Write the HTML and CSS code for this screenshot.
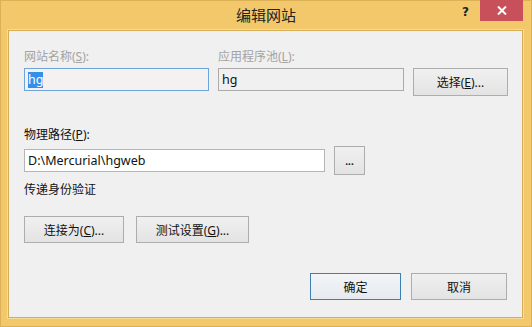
FILE: index.html
```html
<!DOCTYPE html>
<html lang="zh-CN">
<head>
    <meta charset="UTF-8">
    <link rel="stylesheet" href="styles.css">
    <title>编辑网站</title>
</head>
<body>
    <section class="window">

        <div class="titlebar">
            <span class="title">编辑网站</span>
            <span class="help">?</span>
            <span class="close">
                <svg width="10" height="9" viewBox="0 0 10 9">
                    <path d="M1 0.5 L9 8.5 M9 0.5 L1 8.5" stroke="#fff" stroke-width="2"/>
                </svg>
            </span>
        </div>

        <div class="content">
            <div class="site-row">
                <div class="field">
                    <label class="muted">网站名称(<u>S</u>):</label>
                    <div class="input focused"><span class="selected">hg</span></div>
                </div>
                <div class="field">
                    <label class="muted">应用程序池(<u>L</u>):</label>
                    <div class="input readonly">hg</div>
                </div>
                <button class="btn btn-select">选择(<u>E</u>)...</button>
            </div>

            <label class="path-label">物理路径(<u>P</u>):</label>
            <div class="path-row">
                <div class="input path">D:\Mercurial\hgweb</div>
                <button class="btn btn-browse">...</button>
            </div>

            <div class="auth-label">传递身份验证</div>
            <div class="auth-row">
                <button class="btn btn-connect">连接为(<u>C</u>)...</button>
                <button class="btn btn-test">测试设置(<u>G</u>)...</button>
            </div>

            <div class="footer">
                <button class="btn btn-ok">确定</button>
                <button class="btn btn-cancel">取消</button>
            </div>
        </div>

    </section>
</body>
</html>
```

FILE: styles.css
```css
* {
    box-sizing: border-box;
    font-family: "Noto Sans", "Noto Sans CJK SC", sans-serif;
}

html, body {
    margin: 0;
    padding: 0;
    width: 532px;
    height: 327px;
    overflow: hidden;
}

.window {
    width: 532px;
    height: 327px;

    display: flex;
    flex-direction: column;

    background-color: #f2c86b;
    border: 1px solid #dcb057;
}

.titlebar {
    position: relative;
    height: 29px;
    flex-shrink: 0;

    display: flex;
    justify-content: center;
    align-items: center;
}

.title {
    font-size: 15px;
    color: #222;
    margin-top: -2px;
}

.help {
    position: absolute;
    left: 461px;
    top: 4px;

    font-family: "DejaVu Sans", sans-serif;
    font-size: 12px;
    font-weight: bold;
    color: #222;
}

.close {
    position: absolute;
    left: 479px;
    top: -1px;
    width: 43px;
    height: 21px;

    display: flex;
    justify-content: center;
    align-items: center;

    background-color: #c7505a;
}

.content {
    flex: 1;
    margin: 0 8px 8px 7px;
    padding: 16px 14px 0 15px;

    background-color: #f0f0f0;
    border: 1px solid #d5ad57;
    outline: 1px solid #f8dc9a;

    font-size: 12px;
    color: #111;
}

label {
    display: block;
}

.muted {
    color: #a3a3a3;
}

.site-row {
    display: flex;
    align-items: flex-end;
    gap: 9px;
}

.field {
    display: flex;
    flex-direction: column;
    gap: 3px;
}

.field:nth-child(1) {
    width: 185px;
}

.field:nth-child(2) {
    width: 186px;
}

.input {
    height: 23px;
    padding: 0 3px;

    display: flex;
    align-items: center;

    font-size: 12.5px;
    border: 1px solid #ababab;
    background-color: #f0f0f0;
}

.input.focused {
    border-color: #6fa3dc;
    background-color: #f6f1f1;
}

.selected {
    background-color: #3390e8;
    color: #fff;
    line-height: 16px;
}

.btn {
    height: 27px;
    padding: 0;

    font-size: 12px;
    color: #111;

    border: 1px solid #adadad;
    background: linear-gradient(#f0f0f0, #e3e3e3);
}

.btn-select {
    width: 95px;
    height: 28px;
    margin-bottom: -5px;
}

.path-label {
    margin-top: 34px;
}

.path-row {
    display: flex;
    align-items: center;
    gap: 9px;
    margin-top: 3px;
}

.input.path {
    width: 301px;
    background-color: #fff;
    border-color: #b5b5b5;
}

.btn-browse {
    width: 31px;
    height: 29px;
    font-size: 10px;
    font-weight: bold;
}

.auth-label {
    margin-top: 5px;
}

.auth-row {
    display: flex;
    gap: 12px;
    margin-top: 18px;
}

.btn-connect {
    width: 100px;
}

.btn-test {
    width: 113px;
}

.footer {
    display: flex;
    justify-content: flex-end;
    gap: 10px;
    margin-top: 30px;
    margin-right: 1px;
}

.btn-ok {
    width: 91px;
    border-color: #3c7fb1;
    background: linear-gradient(#f3f5f8, #e6e9ee);
}

.btn-cancel {
    width: 96px;
}
```
